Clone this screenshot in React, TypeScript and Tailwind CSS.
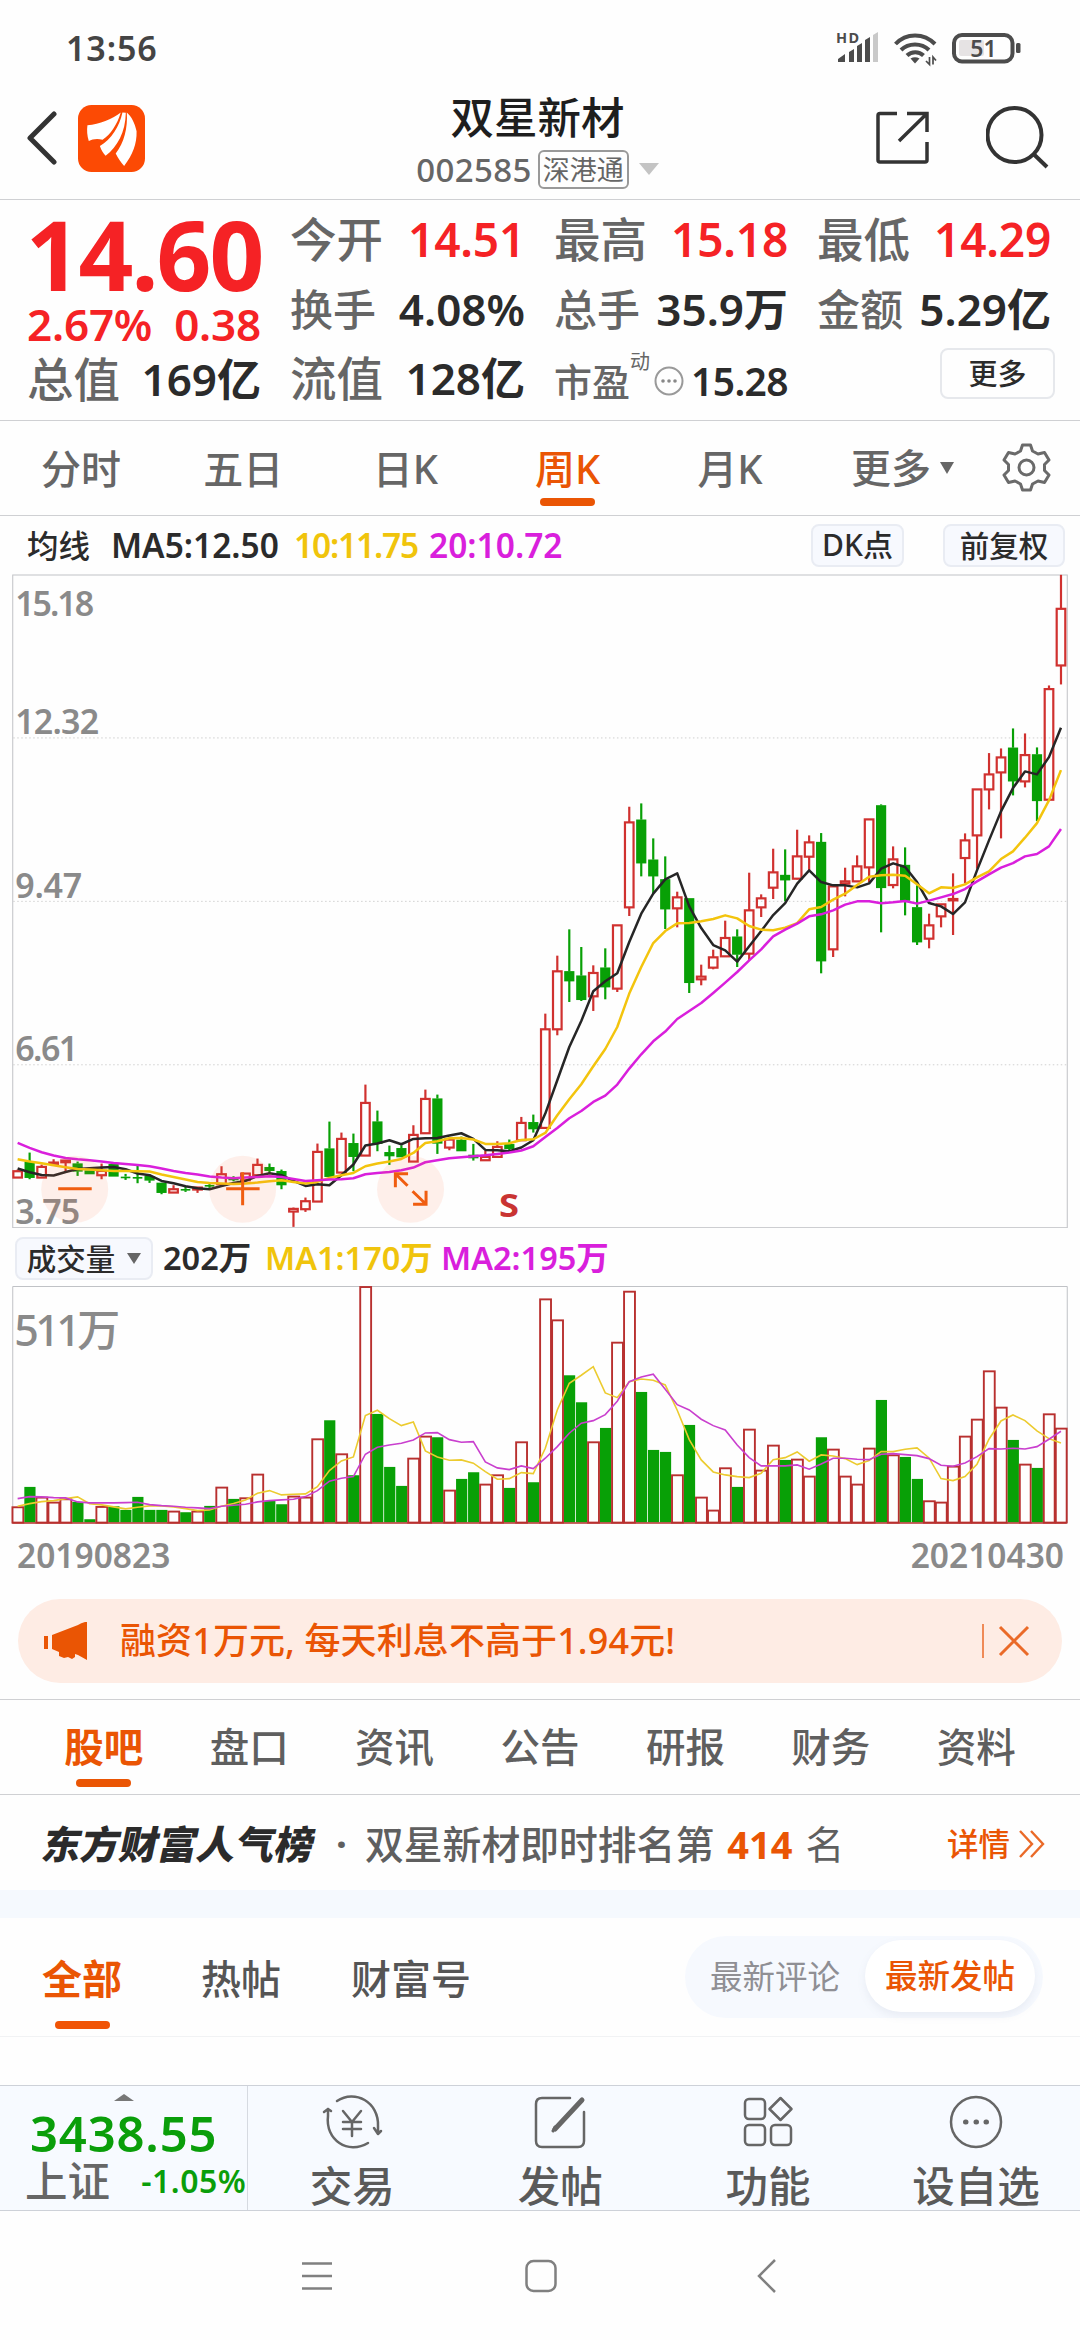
import type { ReactNode } from "react";

type Candle = [up: 0 | 1, top: number, bottom: number, high: number, low: number];

const PITCH = 11.998;
const xAt = (i: number) => 17.4 + i * PITCH;

/* Candles are stored in thirds of a pixel, measured from the `base` line of each block. */
const blocks: { base: number; candles: Candle[] }[] = [
  {
    base: 1060,
    candles: [
      [1, 333, 352, 328, 352], [0, 305, 352, 277, 357], [1, 320, 352, 313, 352], [1, 307, 311, 297, 311],
      [1, 301, 306, 300, 335], [0, 310, 333, 304, 347], [0, 331, 341, 331, 341], [1, 332, 345, 310, 357],
      [0, 312, 348, 312, 348], [0, 349, 352, 341, 359], [0, 350, 353, 317, 369], [0, 348, 360, 343, 368],
      [0, 368, 397, 368, 402], [1, 387, 397, 375, 397], [0, 386, 390, 377, 395], [1, 382, 388, 382, 398],
      [0, 374, 377, 370, 383], [1, 342, 372, 318, 372], [0, 353, 359, 348, 363], [1, 340, 360, 340, 360],
      [1, 314, 345, 295, 345], [0, 321, 331, 310, 340], [0, 333, 374, 328, 387], [1, 446, 454, 442, 500],
      [1, 423, 447, 412, 455], [1, 275, 424, 250, 424], [0, 265, 349, 184, 349], [1, 236, 337, 217, 337],
      [0, 249, 289, 220, 333], [1, 128, 286, 73, 286], [0, 184, 250, 151, 273], [0, 276, 287, 256, 314],
      [0, 264, 290, 255, 290], [1, 224, 304, 195, 304], [1, 116, 219, 88, 219], [0, 115, 249, 103, 281],
      [1, 238, 262, 238, 270], [0, 239, 272, 229, 272], [0, 284, 293, 251, 301], [1, 290, 300, 272, 300],
      [1, 260, 290, 243, 290], [0, 252, 265, 238, 270], [1, 188, 240, 170, 240], [0, 186, 206, 163, 217],
    ],
  },
  {
    base: 780,
    candles: [
      [1, 747, 1043, 700, 1043], [1, 573, 747, 526, 765], [0, 573, 602, 447, 665], [0, 586, 658, 500, 662],
      [1, 578, 648, 555, 692], [0, 562, 620, 504, 657], [1, 435, 625, 435, 635], [1, 126, 381, 79, 407],
      [0, 118, 248, 69, 288], [0, 238, 287, 174, 338], [0, 297, 386, 228, 446], [1, 351, 384, 334, 441],
      [0, 354, 607, 354, 638], [1, 589, 597, 553, 615], [1, 531, 562, 508, 567], [1, 473, 528, 421, 528],
      [0, 469, 522, 447, 560], [1, 390, 520, 277, 540], [1, 354, 381, 342, 410], [1, 276, 322, 205, 356],
      [0, 284, 299, 207, 363], [1, 228, 295, 148, 297], [1, 186, 229, 165, 270], [0, 185, 542, 158, 579],
      [1, 318, 507, 318, 530], [1, 303, 310, 262, 348], [1, 258, 303, 225, 303], [1, 117, 261, 117, 306],
      [0, 75, 322, 72, 456], [1, 237, 314, 198, 324], [0, 254, 360, 201, 405], [0, 381, 485, 315, 494],
      [1, 435, 475, 400, 504], [1, 372, 408, 372, 441], [1, 356, 360, 279, 464], [1, 180, 233, 159, 309],
    ],
  },
  {
    base: 570,
    candles: [
      [1, 657, 795, 657, 895], [1, 612, 657, 548, 717], [1, 561, 606, 534, 804], [0, 532, 632, 474, 675],
      [1, 554, 633, 489, 651], [0, 552, 691, 531, 752], [1, 356, 688, 345, 688], [1, 115, 285, 13, 342],
    ],
  },
];

const candles: Candle[] = blocks.flatMap(({ base, candles: list }) =>
  list.map(([up, ...v]) => [up, ...v.map((n) => base + n / 3)] as Candle),
);

const series = (left: number[], right: number[], last: number[]) => [
  ...left.map((n) => 1060 + n / 3),
  ...right.map((n) => 780 + n / 3),
  ...last.map((n) => 570 + n / 3),
];

const ma5 = series(
  [325, 336, 344, 346, 335, 326, 324, 322, 320, 327, 340, 345, 362, 369, 378, 384, 387, 377, 368, 362, 347, 339, 345, 362, 377, 372, 375, 345, 313, 256, 250, 240, 252, 236, 234, 233, 226, 219, 236, 269, 270, 273, 262, 240],
  [1000, 900, 800, 722, 633, 603, 579, 485, 400, 340, 297, 279, 378, 443, 494, 510, 544, 498, 452, 404, 368, 310, 270, 305, 315, 315, 321, 309, 265, 249, 260, 305, 368, 378, 401, 366, 270, 180, 93, 23],
  [603, 612, 560, 472],
);
const ma10 = series(
  [297, 304, 309, 315, 321, 326, 328, 330, 332, 332, 333, 334, 343, 350, 358, 365, 368, 370, 371, 370, 367, 363, 360, 365, 370, 365, 353, 345, 338, 318, 310, 304, 296, 278, 248, 243, 234, 233, 238, 251, 251, 249, 239, 237],
  [1058, 1005, 957, 912, 858, 806, 740, 640, 560, 488, 452, 429, 428, 423, 416, 405, 414, 437, 448, 450, 442, 428, 387, 380, 358, 340, 314, 289, 285, 283, 286, 312, 339, 321, 323, 312, 291, 273, 236, 213, 172, 128, 60],
  [599],
);
const ma20 = series(
  [248, 263, 276, 286, 293, 297, 300, 304, 308, 311, 314, 318, 325, 332, 338, 343, 349, 352, 354, 352, 350, 348, 350, 356, 362, 360, 358, 357, 354, 342, 338, 335, 330, 322, 306, 300, 294, 291, 288, 285, 281, 277, 271, 258],
  [1070, 1043, 1014, 992, 965, 946, 913, 865, 822, 783, 754, 716, 692, 668, 638, 607, 575, 540, 507, 468, 448, 430, 408, 402, 390, 373, 363, 363, 369, 366, 362, 370, 361, 351, 341, 326, 303, 282, 262, 248, 228, 221, 198, 146],
  [],
);

const volumes = [
  830, 771, 801, 816, 806, 816, 868, 829, 829, 840, 801, 840, 840, 843, 847, 843, 828, 771, 807, 803, 732, 813,
  823, 798, 801, 626, 571, 671, 736, 169, 552, 711, 768, 684, 618, 622, 780, 747, 727, 762, 734, 774, 635, 757,
  206, 269, 436, 517, 635, 594, 336, 183, 486, 660, 666, 734, 585, 801, 840, 713, 771, 597, 720, 645, 690, 687,
  738, 622, 657, 738, 762, 654, 510, 674, 681, 747, 812, 816, 708, 618, 567, 422, 531, 630, 702, 714, 551, 594,
].map((n) => 1230 + n / 3);

const vma1 = [
  829, 821, 815, 812, 806, 801, 821, 825, 831, 837, 832, 828, 828, 831, 836, 842, 840, 829, 821, 810, 790, 782,
  795, 793, 792, 770, 722, 693, 681, 557, 541, 566, 587, 576, 663, 681, 691, 690, 700, 725, 748, 746, 728, 731,
  655, 540, 460, 436, 410, 489, 503, 455, 447, 451, 465, 541, 629, 690, 726, 735, 740, 743, 730, 689, 683, 666,
  694, 675, 678, 686, 704, 692, 665, 665, 658, 654, 684, 746, 752, 740, 703, 628, 573, 555, 572, 603, 626, 639,
].map((n) => 1230 + n / 3);

const vma2 = [
  806, 800, 801, 803, 804, 816, 819, 819, 819, 818, 817, 824, 827, 829, 832, 834, 836, 829, 826, 823, 816, 812,
  810, 808, 800, 782, 754, 745, 740, 673, 652, 645, 640, 630, 609, 608, 629, 637, 635, 696, 714, 719, 708, 716,
  685, 650, 610, 580, 572, 554, 514, 455, 441, 433, 478, 524, 540, 568, 587, 600, 645, 683, 708, 708, 708, 705,
  718, 702, 685, 685, 688, 689, 673, 671, 674, 677, 686, 706, 709, 699, 680, 656, 657, 655, 657, 650, 628, 604,
].map((n) => 1230 + n / 3);

const points = (ys: number[]) => ys.map((y, i) => `${xAt(i).toFixed(1)},${y.toFixed(1)}`).join(" ");

function PriceChart() {
  return (
    <svg className="block h-[655px] w-full" viewBox="0 573.5 1080 655" fill="none">
      <rect x="12.5" y="574.5" width="1055" height="653" stroke="#c0c2c6" />
      {[737.5, 901, 1064.5].map((y) => (
        <line key={y} x1="13" x2="1067" y1={y} y2={y} stroke="#d0d0d0" strokeDasharray="1.5 2.5" />
      ))}
      <g fill="#8a8a8a" fontSize="34" fontWeight="600">
        <text x="15" y="615.5" textLength="79">15.18</text>
        <text x="15" y="733.5" textLength="84">12.32</text>
        <text x="15" y="898" textLength="67">9.47</text>
        <text x="15" y="1061" textLength="63">6.61</text>
        <text x="15" y="1224" textLength="65">3.75</text>
      </g>
      {candles.map(([up, top, bottom, high, low], i) => {
        const x = xAt(i);
        const color = up ? "#d0312f" : "#08a006";
        return (
          <g key={i} stroke={color} strokeWidth="2.2">
            {high < top && <line x1={x} x2={x} y1={high} y2={top} />}
            {low > bottom && <line x1={x} x2={x} y1={bottom} y2={low} />}
            {up ? (
              <rect x={x - 4.3} y={top} width="8.6" height={Math.max(bottom - top, 1)} />
            ) : (
              <rect x={x - 4.3} y={top + 0.6} width="8.6" height={Math.max(bottom - top - 1, 0.6)} fill={color} strokeWidth={bottom - top < 2 ? 1 : 1.6} />
            )}
          </g>
        );
      })}
      <g strokeWidth="2.5" strokeLinejoin="round">
        <polyline points={points(ma5)} stroke="#262626" />
        <polyline points={points(ma10)} stroke="#f3c40d" />
        <polyline points={points(ma20)} stroke="#d91fdc" />
      </g>
      <g fill="#fc6b3c" fillOpacity="0.1">
        <circle cx="74.5" cy="1189" r="33.5" />
        <circle cx="242.5" cy="1189" r="33.5" />
        <circle cx="410.5" cy="1189" r="33.5" />
      </g>
      <g stroke="#f05d10" strokeWidth="3">
        <path d="M58 1188.5H91.5M226 1188.5H259.5M242.5 1172V1205" />
        <path d="M408 1173.5H395.3V1187M395.3 1173.5L407.5 1185.5M413 1204H426V1190.5M426 1204L412.5 1191" />
      </g>
      <text x="499" y="1217" fill="#c93432" fontSize="33" fontWeight="700" textLength="20" lengthAdjust="spacingAndGlyphs">S</text>
    </svg>
  );
}

function VolumeChart() {
  return (
    <svg className="block h-[238px] w-full" viewBox="0 1286 1080 238" fill="none">
      <path d="M12.500 1523V1286.500H1067.500V1523" stroke="#c0c2c6" />
      <text x="14" y="1346" fill="#8a8a8a" fontSize="43" fontWeight="500" textLength="106">511万</text>
      {volumes.map((y, i) => {
        const x = xAt(i);
        return candles[i][0] ? (
          <rect key={i} x={x - 5.2} y={y + 0.7} width="10.9" height={1522 - y} stroke="#b8302f" strokeWidth="1.9" />
        ) : (
          <rect key={i} x={x - 5.3} y={y} width="11.200" height={1522.500 - y} fill="#08a006" />
        );
      })}
      <path d="M12 1523H1067" stroke="#b8302f" strokeWidth="1.500" />
      <polyline points={points(vma1)} stroke="#eccb2f" strokeWidth="1.6" />
      <polyline points={points(vma2)} stroke="#c93fce" strokeWidth="1.6" />
    </svg>
  );
}

function StatusBar() {
  return (
    <div className="flex h-[76px] items-center justify-between pt-5 pr-[58px] pl-[66px]">
      <span className="text-[34px] leading-none font-semibold tracking-[0.9px] text-[#444]">13:56</span>
      <svg className="h-[56px] w-[188px]" viewBox="834 20 188 56" fill="#4c4c4c">
        <text x="836" y="42.500" fontSize="14.500" fontWeight="700" textLength="23">HD</text>
        <path d="M838 59L845 54V62H838ZM849 52L854 49V62H849ZM857 46L862 43V62H857ZM865 40L870 37V62H865Z" />
        <path d="M873 35L878 32V62H873Z" fill="#c9c9c9" />
        <g fill="none" stroke="#4c4c4c" strokeWidth="4">
          <path d="M895.500 44C906 32.500 924 32.500 935 44" />
          <path d="M901 50C908.500 42.500 921.500 42.500 929 50" />
          <path d="M907 55.500C911.500 51 919 51 923.500 55.500" />
        </g>
        <path d="M910.500 58.500Q915 56 919.500 58.500L915 63.500Z" />
        <path d="M929.500 57V64.500L926 61M933 64.500V57L936 60.500" fill="none" stroke="#4c4c4c" strokeWidth="1.700" />
        <rect x="954" y="35" width="58.500" height="26.500" rx="8" fill="none" stroke="#4c4c4c" strokeWidth="4" />
        <rect x="959" y="40" width="25" height="16" rx="2" fill="#e6e3e4" />
        <rect x="1016" y="43" width="4.500" height="10" rx="1.500" />
        <text x="983.500" y="57" textAnchor="middle" fontSize="23" fontWeight="600">51</text>
      </svg>
    </div>
  );
}

function Header() {
  return (
    <header className="grid h-[124px] grid-cols-[1fr_auto_1fr] items-center border-b border-[#cfd0d3] pr-[31px] pl-[26px]">
      <div className="flex items-center gap-[21px] pt-0.5">
        <svg className="h-[54px] w-[31px]" viewBox="0 0 31 54" fill="none" stroke="#333" strokeWidth="5" strokeLinecap="round" strokeLinejoin="round">
          <path d="M28 3L4 27L28 51" />
        </svg>
        <svg className="h-[67px] w-[67px]" viewBox="175 44 199 199">
          <rect x="175" y="44" width="199" height="199" rx="40" fill="#fc4a04" />
          <g fill="#fff">
            <path d="M203 104C240 100 275 87 302 66C292 100 272 132 248 147C232 143 218 145 207 151C202 135 201 118 203 104Z" />
            <path d="M307 66C298 108 274 146 240 166C244 178 250 188 257 195C292 168 316 125 317 67Z" />
            <path d="M320 66C323 112 312 156 287 188C294 202 303 215 312 225C337 193 350 160 349 122C344 98 334 78 320 66Z" />
          </g>
        </svg>
      </div>
      <div className="flex flex-col items-center gap-[10px] pt-[8px]">
        <h1 className="text-[43.500px] leading-[46px] font-medium text-[#1e1e1e]">双星新材</h1>
        <div className="flex h-[39px] items-center">
          <span className="text-[33px] leading-none font-medium tracking-[0.4px] text-[#666]">002585</span>
          <span className="ml-[6px] flex h-[39px] w-[91px] items-center justify-center rounded-md border-2 border-[#999] text-[27px] leading-none text-[#666]">深港通</span>
          <svg className="ml-[10px] h-3 w-5" viewBox="0 0 20 12" fill="#c4c4c4"><path d="M0 0H20L10 12Z" /></svg>
        </div>
      </div>
      <div className="flex items-center justify-end gap-[57px]">
        <svg className="h-[53px] w-[53px]" viewBox="0 0 53 53" fill="none" stroke="#333" strokeWidth="3.500">
          <path d="M21 2.500H4Q2 2.500 2 4.500V49Q2 51 4 51H49Q51 51 51 49V31M31 2.500H51V21M51 2.500L23 30" />
        </svg>
        <svg className="h-[64px] w-[63px]" viewBox="0 0 63 64" fill="none" stroke="#333" strokeWidth="4">
          <circle cx="28.500" cy="30" r="27" /><path d="M47.500 49L61 62" />
        </svg>
      </div>
    </header>
  );
}

function Stat({ label, value, size = "md", red = false }: { label: string; value: string; size?: "md" | "lg"; red?: boolean }) {
  return (
    <div className="flex h-full items-center justify-between">
      <span className={size === "lg" ? "text-[46.500px] leading-none font-medium text-[#666]" : "text-[43px] leading-none font-medium text-[#666]"}>{label}</span>
      <span className={red ? "text-[46px] leading-none font-semibold tracking-[-0.2px] text-[#f52225]" : "text-[44px] leading-none font-semibold text-[#2b2b2b]"}>{value}</span>
    </div>
  );
}

function Quote() {
  return (
    <section className="flex h-[221px] gap-[29px] border-b border-[#cfd0d3] px-[27px]">
      <div className="w-[234px]">
        <div className="flex h-[90px] items-center justify-center pt-[18px] text-[96px] leading-none font-bold tracking-[-2px] text-[#f52225]">14.60</div>
        <div className="flex h-[54px] items-center justify-between pt-[14px] text-[44px] leading-none font-semibold tracking-[-0.2px] text-[#f52225]">
          <span>2.67%</span><span>0.38</span>
        </div>
        <div className="h-[70px]"><Stat label="总值" value="169亿" size="lg" /></div>
      </div>
      <div className="grid w-[235px] grid-rows-[78px_63px_75px]">
        <Stat label="今开" value="14.51" size="lg" red />
        <Stat label="换手" value="4.08%" />
        <Stat label="流值" value="128亿" size="lg" />
      </div>
      <div className="grid w-[234px] grid-rows-[78px_63px_75px]">
        <Stat label="最高" value="15.18" size="lg" red />
        <Stat label="总手" value="35.9万" />
        <div className="flex items-center pt-[5px]">
          <span className="text-[38px] leading-none font-medium text-[#666]">市盈</span>
          <span className="mb-[38px] text-[20px] leading-none text-[#666]">动</span>
          <svg className="ml-1 h-[30px] w-[30px]" viewBox="0 0 30 30" fill="#888">
            <circle cx="15" cy="15" r="13.500" fill="none" stroke="#999" strokeWidth="2" />
            <circle cx="9" cy="15" r="1.800" /><circle cx="15" cy="15" r="1.800" /><circle cx="21" cy="15" r="1.800" />
          </svg>
          <span className="ml-auto text-[39px] leading-none font-semibold tracking-[-0.6px] text-[#2b2b2b]">15.28</span>
        </div>
      </div>
      <div className="grid w-[234px] grid-rows-[78px_63px_75px]">
        <Stat label="最低" value="14.29" size="lg" red />
        <Stat label="金额" value="5.29亿" />
        <div className="flex justify-end pt-[7px]">
          <button className="mr-[-4px] flex h-[51px] w-[115px] items-center justify-center rounded-lg border-2 border-[#e6e8ec] text-[29px] leading-none font-medium text-[#2b2b2b]">更多</button>
        </div>
      </div>
    </section>
  );
}

function PeriodTabs() {
  const tabs = ["分时", "五日", "日K", "周K", "月K"];
  return (
    <nav className="flex h-[95px] items-center border-b border-[#cfd0d3] text-[40px] leading-none font-medium text-[#666]">
      {tabs.map((t) => (
        <span key={t} className={t === "周K" ? "flex h-full w-[162.200px] flex-col items-center pt-[28px] text-[#ea5504]" : "flex h-full w-[162.200px] flex-col items-center pt-[28px]"}>
          {t}
          {t === "周K" && <i className="mt-[9px] h-[8px] w-[55px] rounded-full bg-[#ea5504]" />}
        </span>
      ))}
      <span className="ml-[40px] flex items-center gap-[9px] pt-[1px]">
        更多
        <svg className="h-3 w-[14px]" viewBox="0 0 14 12" fill="#666"><path d="M0 0H14L7 12Z" /></svg>
      </span>
      <svg className="ml-[48px] h-[49px] w-[49px]" viewBox="0 0 49 49" fill="none" stroke="#6a6a6a" strokeWidth="3" strokeLinejoin="round">
        <path d="M20.500 2H28.500L30.500 8L36 11L42.500 9.500L47 17L42.500 21.500V27.500L47 32L42.500 39.500L36 38L30.500 41L28.500 47H20.500L18.500 41L13 38L6.500 39.500L2 32L6.500 27.500V21.500L2 17L6.500 9.500L13 11L18.500 8Z" />
        <circle cx="24.500" cy="24.500" r="7.500" />
      </svg>
    </nav>
  );
}

const chip = "flex items-center justify-center rounded-lg border-2 border-[#e9ecf3] bg-[#f7f9fe] leading-none font-medium text-[#2b2b2b]";

function MaRow() {
  return (
    <div className="flex h-[58px] items-center pt-[1px] pr-[15px] pl-[27px] text-[33.500px] leading-none font-semibold">
      <span className="w-[84px] text-[31.500px] font-medium text-[#2b2b2b]">均线</span>
      <span className="w-[183px] text-[#2b2b2b]">MA5:12.50</span>
      <span className="w-[135px] tracking-[-1.2px] text-[#f0c40c]">10:11.75</span>
      <span className="text-[#d91fdc]">20:10.72</span>
      <span className="ml-auto flex gap-[39px]">
        <span className={`${chip} h-[43px] w-[93px] text-[30px]`}>DK点</span>
        <span className={`${chip} h-[43px] w-[122px] text-[29.500px]`}>前复权</span>
      </span>
    </div>
  );
}

function VolumeRow() {
  return (
    <div className="flex h-[58px] items-center pt-[2px] pl-[15px] text-[32.500px] leading-none font-semibold">
      <span className={`${chip} h-[43px] w-[138px] gap-[12px] text-[29.500px]`}>
        成交量
        <svg className="h-[11px] w-[14px]" viewBox="0 0 14 11" fill="#666"><path d="M0 0H14L7 11Z" /></svg>
      </span>
      <span className="ml-[10px] w-[102px] text-[#2b2b2b]">202万</span>
      <span className="w-[176px] text-[#f0c40c]">MA1:170万</span>
      <span className="text-[#d91fdc]">MA2:195万</span>
    </div>
  );
}

function Banner() {
  return (
    <div className="mx-[18px] flex h-[84px] items-center rounded-full bg-[#feece4] pr-[32px] pl-[26px] text-[#ea5504]">
      <svg className="h-[38px] w-[44px]" viewBox="0 0 44 38" fill="#ea5504">
        <path d="M0 14H4V27H0ZM8 13L34 3Q37 1 41 0H43V38L34 33L31 32V35L28 37L24 35L20 36L15 34V30L8 27Z" />
      </svg>
      <span className="ml-[32px] text-[36px] leading-none font-medium tracking-[0.1px]">融资1万元, 每天利息不高于1.94元!</span>
      <svg className="ml-auto h-[34px] w-[48px]" viewBox="0 0 48 34" fill="none" stroke="#ea6a28">
        <path d="M1 0V34" strokeWidth="1.500" /><path d="M18 3L46 31M46 3L18 31" strokeWidth="3" />
      </svg>
    </div>
  );
}

function InfoTabs() {
  const tabs = ["股吧", "盘口", "资讯", "公告", "研报", "财务", "资料"];
  return (
    <nav className="mt-[16px] grid h-[96px] grid-cols-7 border-y border-[#cfd0d3] px-[31px] text-[39.500px] leading-none font-medium text-[#5f5f5f]">
      {tabs.map((t, i) => (
        <span key={t} className={i === 0 ? "flex flex-col items-center pt-[28px] font-semibold text-[#ea5504]" : "flex flex-col items-center pt-[28px]"}>
          {t}
          {i === 0 && <i className="mt-[11px] h-[8px] w-[55px] rounded-full bg-[#ea5504]" />}
        </span>
      ))}
    </nav>
  );
}

function RankRow() {
  return (
    <div className="flex h-[95px] items-center pt-[3px] pr-[35px] pl-[43px] text-[38.800px] leading-none text-[#5f5f5f]">
      <span className="w-[293px] -skew-x-12 text-[38.800px] font-black text-[#2b2b2b]">东方财富人气榜</span>
      <span className="w-[29px] font-bold">·</span>
      <span className="font-medium">双星新材即时排名第</span>
      <b className="ml-[13px] text-[38px] font-bold text-[#ea5504]">414</b>
      <span className="ml-[13px]">名</span>
      <span className="ml-auto flex items-center gap-[9px] text-[31.500px] font-medium text-[#ea5504]">
        详情
        <svg className="h-[28px] w-[26px]" viewBox="0 0 26 28" fill="none" stroke="#ea6a28" strokeWidth="2.400">
          <path d="M1 1L13 14L1 27M12 1L24 14L12 27" />
        </svg>
      </span>
    </div>
  );
}

function PostTabs() {
  return (
    <div className="flex h-[119px] justify-between border-b border-[#f1f2f4] pr-[37px] pl-[42px]">
      <div className="flex gap-[79px] pt-[41px] text-[40px] leading-none font-medium text-[#555]">
        <span className="flex flex-col items-center font-bold text-[#ea5504]">
          全部
          <i className="mt-[22px] h-[8px] w-[55px] rounded-full bg-[#f05406]" />
        </span>
        <span>热帖</span>
        <span className="-ml-[9px]">财富号</span>
      </div>
      <div className="mt-[18px] flex h-[82px] w-[358px] items-center rounded-full bg-[#f6f9fe] pl-[25px] text-[32.500px] leading-none text-[#8f8f94]">
        最新评论
        <span className="mr-[8px] mb-[3px] ml-auto flex h-[72px] w-[170px] items-center justify-center rounded-full bg-white pt-[2px] font-medium text-[#ea5504] shadow-[0_4px_8px_rgba(120,130,160,0.100)]">最新发帖</span>
      </div>
    </div>
  );
}

function Action({ label, children }: { label: string; children: ReactNode }) {
  return (
    <div className="flex w-[208.500px] flex-col items-center pt-[8px]">
      <svg className="h-[56px] w-[62px]" viewBox="-31 -28 62 56" fill="none" stroke="#666" strokeWidth="2.500" strokeLinecap="round" strokeLinejoin="round">
        {children}
      </svg>
      <span className="mt-[15px] text-[42.500px] leading-none font-medium text-[#5a5a5a]">{label}</span>
    </div>
  );
}

function BottomBar() {
  return (
    <div className="flex h-[126px] border-y border-[#cdd1d8] bg-[#f7faff]">
      <div className="flex w-[249px] flex-col border-r border-[#d6dae1]">
        <svg className="mt-[8px] ml-[114px] h-[7px] w-5" viewBox="0 0 20 7" fill="#777"><path d="M0 7L10 0L20 7Z" /></svg>
        <span className="mt-[8px] ml-[30px] text-[49px] leading-none font-semibold tracking-[0.8px] text-[#0a9e0a]">3438.55</span>
        <div className="mt-[2px] flex items-center justify-between pr-[1px] pl-[25px]">
          <span className="text-[42.500px] leading-none font-medium text-[#666]">上证</span>
          <span className="text-[32px] leading-none font-semibold tracking-[0.5px] text-[#0a9e0a]">-1.05%</span>
        </div>
      </div>
      <Action label="交易">
        <path d="M-15 -21C3 -33 27 -20 26 4V12L29 9M26 12L22 6M16 21C-4 33 -27 18 -24 -6V-13L-28 -10M-24 -13L-21 -11" />
        <path d="M-9 -11L0 0L9 -11M0 0V14M-9 0H9M-9 7H9" />
      </Action>
      <Action label="发帖">
        <path d="M10 -24H-18Q-24 -24 -24 -18V19Q-24 25 -18 25H18Q24 25 24 19V-10" />
        <path d="M22 -22L-5 7" strokeWidth="5" /><path d="M-5 5L-7 9" strokeWidth="3" />
      </Action>
      <Action label="功能">
        <rect x="-23" y="-23" width="20" height="20" rx="4" />
        <path d="M12.500 -24L23.500 -13L12.500 -2L1.500 -13Z" />
        <rect x="-23" y="3" width="20" height="20" rx="4" />
        <rect x="3" y="3" width="20" height="20" rx="4" />
      </Action>
      <Action label="设自选">
        <circle r="25" />
        <path d="M-10.500 0H-10M0 0H0.500M10 0H10.500" strokeWidth="5" />
      </Action>
    </div>
  );
}

function SystemNav() {
  return (
    <div className="flex h-[129px] items-center justify-center gap-[192px] pl-[2px]">
      <svg className="h-[32px] w-[32px]" viewBox="0 0 32 32" stroke="#808080" strokeWidth="2.500"><path d="M1 3.500H31M1 16H31M1 28.500H31" /></svg>
      <svg className="h-[34px] w-[32px]" viewBox="0 0 32 34" fill="none" stroke="#808080" strokeWidth="2.500"><rect x="1.500" y="2" width="29" height="30" rx="7" /></svg>
      <svg className="h-[34px] w-[32px]" viewBox="0 0 32 34" fill="none" stroke="#808080" strokeWidth="2.500"><path d="M26 1L10 17L26 33" /></svg>
    </div>
  );
}

export default function App() {
  return (
    <main className="flex h-[2340px] w-[1080px] flex-col overflow-hidden bg-[#fefefe] font-['Noto_Sans','Noto_Sans_CJK_SC',sans-serif] whitespace-nowrap">
      <StatusBar />
      <Header />
      <Quote />
      <PeriodTabs />
      <MaRow />
      <PriceChart />
      <VolumeRow />
      <VolumeChart />
      <div className="flex h-[75px] items-start justify-between pt-[15px] pr-[16px] pl-[17px] text-[33.500px] leading-none font-semibold text-[#8a8a8a]">
        <span>20190823</span>
        <span>20210430</span>
      </div>
      <Banner />
      <InfoTabs />
      <RankRow />
      <div className="h-[28px] bg-[#f5f9fe]" />
      <PostTabs />
      <div className="h-[48px]" />
      <BottomBar />
      <SystemNav />
    </main>
  );
}
